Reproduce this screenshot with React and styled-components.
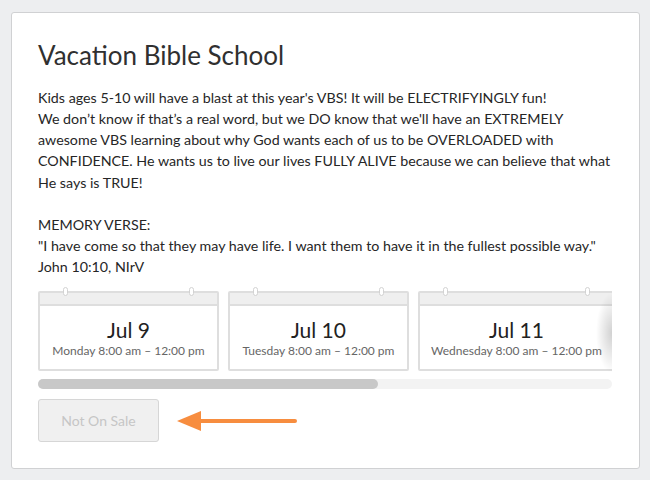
import React from 'react'
import styled, { createGlobalStyle } from 'styled-components'

const GlobalStyle = createGlobalStyle`
  html, body {
    margin: 0;
    padding: 0;
    background: #edeef0;
    font-family: Lato, "Liberation Sans", sans-serif;
  }
`

const dates = [
  { day: 'Jul 9', weekday: 'Monday' },
  { day: 'Jul 10', weekday: 'Tuesday' },
  { day: 'Jul 11', weekday: 'Wednesday' },
  { day: 'Jul 12', weekday: 'Thursday' },
  { day: 'Jul 13', weekday: 'Friday' }
]

const App = () => (
  <Page>
    <GlobalStyle />
    <Card>
      <Title>Vacation Bible School</Title>
      <Description>
        Kids ages 5-10 will have a blast at this year's VBS! It will be ELECTRIFYINGLY fun!<br />
        We don’t know if that’s a real word, but we DO know that we'll have an EXTREMELY
        awesome VBS learning about why God wants each of us to be OVERLOADED with
        CONFIDENCE. He wants us to live our lives FULLY ALIVE because we can believe that what
        He says is TRUE!<br />
        <br />
        MEMORY VERSE:<br />
        "I have come so that they may have life. I want them to have it in the fullest possible way."<br />
        John 10:10, NIrV
      </Description>
      <Scroller>
        <Track>
          {dates.map(d => (
            <DateTile key={d.day}>
              <TileHeader>
                <Pin side='left' />
                <Pin side='right' />
              </TileHeader>
              <TileDay>{d.day}</TileDay>
              <TileTime>{d.weekday} 8:00 am – 12:00 pm</TileTime>
            </DateTile>
          ))}
        </Track>
        <Fade />
        <ScrollBar>
          <Thumb />
        </ScrollBar>
      </Scroller>
      <Actions>
        <SaleButton disabled>Not On Sale</SaleButton>
        <svg width='124' height='24' viewBox='0 0 124 24'>
          <path d='M120 12 H22' stroke='#f78d3f' strokeWidth='4' strokeLinecap='round' />
          <path d='M2 12 L26 2 L26 22 Z' fill='#f78d3f' />
        </svg>
      </Actions>
    </Card>
  </Page>
)

const Page = styled.div`
  padding: 12px 10px 11px 11px;
`
const Card = styled.div`
  background: #fff;
  border: 1px solid #d0d1d3;
  border-radius: 3px;
  padding: 26px 26px 25px 26px;
  box-sizing: border-box;
  height: 457px;
`
const Title = styled.h1`
  margin: 0 0 16px;
  font-size: 26px;
  font-weight: 400;
  color: #303030;
  line-height: 32px;
`
const Description = styled.p`
  margin: 0 0 10px;
  font-size: 14.25px;
  line-height: 21.15px;
  color: #262626;
`
const Scroller = styled.div`
  position: relative;
  width: 574px;
  overflow: hidden;
  padding-top: 4px;
`
const Track = styled.div`
  display: flex;
  gap: 9px;
`
const DateTile = styled.div`
  flex: 0 0 auto;
  min-width: 181px;
  height: 80px;
  border: 2px solid #dedede;
  border-radius: 2px;
  box-sizing: border-box;
  display: flex;
  flex-direction: column;
  align-items: center;
`
const TileHeader = styled.div`
  position: relative;
  align-self: stretch;
  height: 11px;
  background: #efefef;
  border-bottom: 2px solid #dedede;
`
const Pin = styled.span`
  position: absolute;
  top: -6px;
  ${p => (p.side === 'left' ? 'left: 23px;' : 'right: 23px;')}
  width: 3px;
  height: 7px;
  border: 1px solid #d2d2d2;
  border-radius: 3px;
  background: #fff;
`
const TileDay = styled.div`
  margin-top: 12px;
  font-size: 21px;
  line-height: 24px;
  color: #222;
`
const TileTime = styled.div`
  margin-top: 1px;
  padding: 0 11px;
  font-size: 12px;
  line-height: 16px;
  color: #666;
  white-space: nowrap;
`
const Fade = styled.div`
  position: absolute;
  top: 4px;
  right: 0;
  width: 16px;
  height: 84px;
  background: radial-gradient(ellipse 16px 40px at 100% 50%, rgba(0, 0, 0, 0.18), rgba(0, 0, 0, 0));
`
const ScrollBar = styled.div`
  margin-top: 8px;
  height: 10px;
  background: #f3f3f3;
  border-radius: 5px;
`
const Thumb = styled.div`
  width: 340px;
  height: 10px;
  background: #c8c8c8;
  border-radius: 5px;
`
const Actions = styled.div`
  display: flex;
  align-items: center;
  gap: 16px;
  margin-top: 10px;
`
const SaleButton = styled.button`
  width: 121px;
  height: 43px;
  background: #f0f0f0;
  border: 1px solid #d6d6d6;
  border-radius: 3px;
  font-family: Lato, "Liberation Sans", sans-serif;
  font-size: 14px;
  color: #c6c6c6;
`

export default App
